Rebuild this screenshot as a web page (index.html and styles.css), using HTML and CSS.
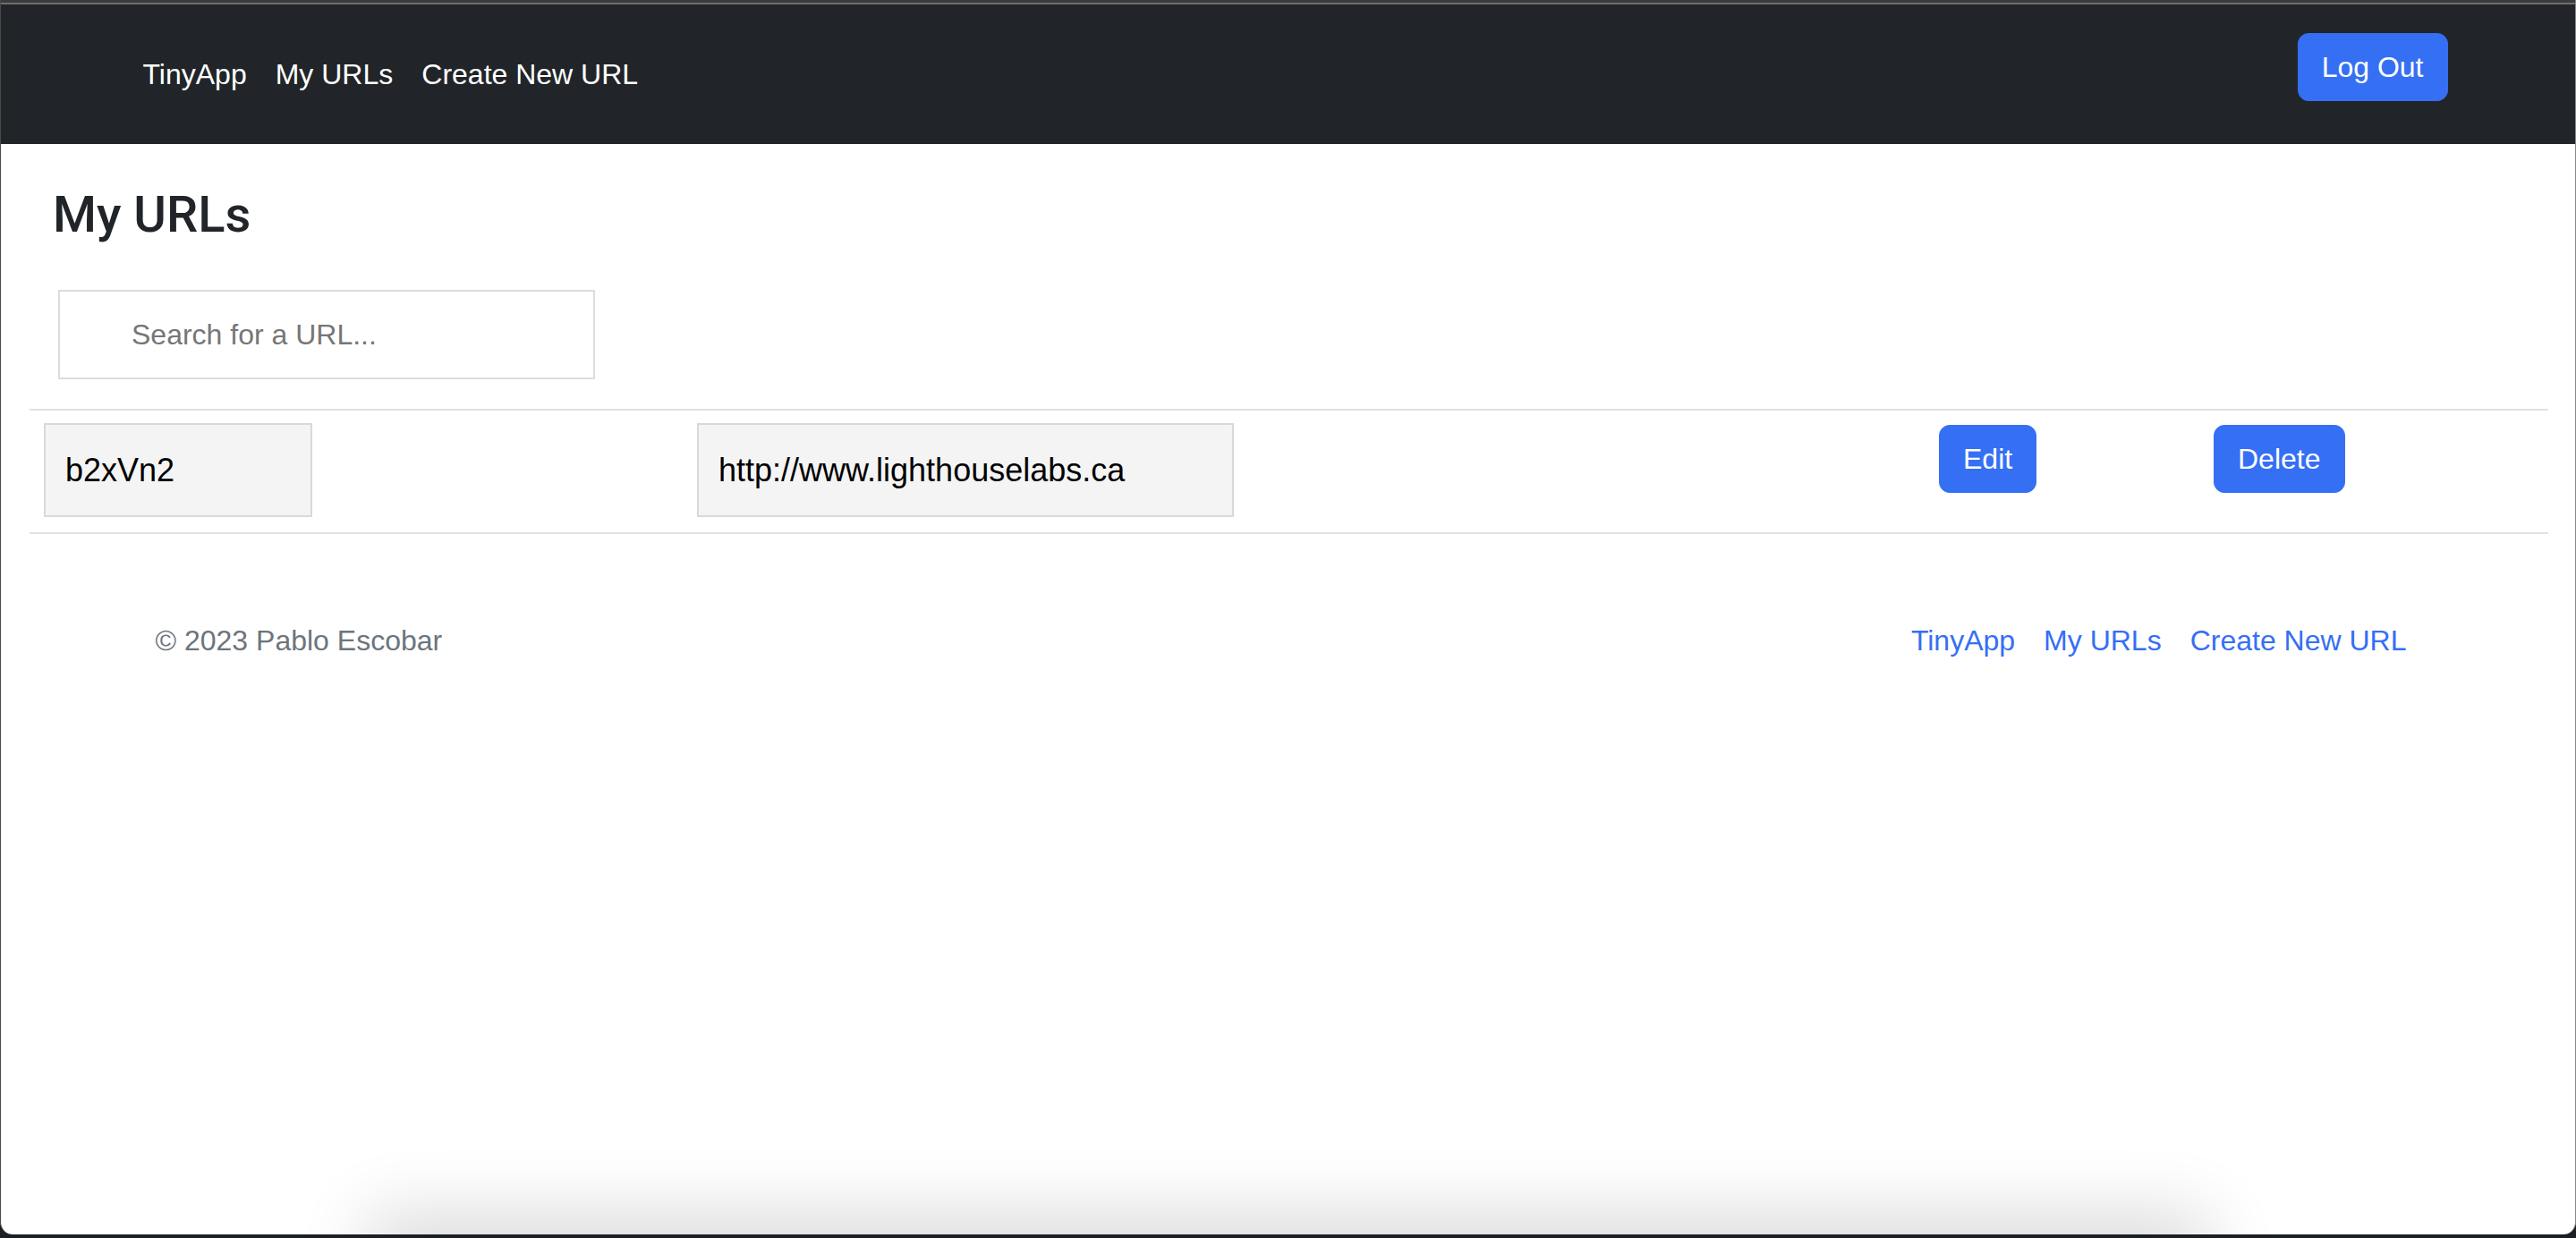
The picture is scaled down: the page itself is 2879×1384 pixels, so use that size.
FILE: index.html
```html
<!DOCTYPE html>
<html lang="en">
<head>
<meta charset="utf-8">
<title>TinyApp - My URLs</title>
<link rel="stylesheet" href="styles.css">
</head>
<body>
<div class="window">
  <div class="chrome-top"></div>
  <nav class="navbar">
    <div class="container nav-inner">
      <ul class="nav-links">
        <li><a href="#" class="nav-link">TinyApp</a></li>
        <li><a href="#" class="nav-link">My URLs</a></li>
        <li><a href="#" class="nav-link">Create New URL</a></li>
      </ul>
      <button class="btn">Log Out</button>
    </div>
  </nav>

  <main class="main">
    <h3 class="title">My URLs</h3>
    <input class="search" type="text" placeholder="Search for a URL...">
  </main>

  <table class="url-table">
    <tbody>
      <tr>
        <td class="col-short"><input class="cell-input short" type="text" value="b2xVn2" readonly></td>
        <td class="col-long"><input class="cell-input long" type="text" value="http://www.lighthouselabs.ca" readonly></td>
        <td class="col-edit"><button class="btn">Edit</button></td>
        <td class="col-delete"><button class="btn">Delete</button></td>
      </tr>
    </tbody>
  </table>

  <footer class="container">
    <div class="footer-inner">
      <p class="copyright">© 2023 Pablo Escobar</p>
      <ul class="footer-links">
        <li><a href="#" class="footer-link">TinyApp</a></li>
        <li><a href="#" class="footer-link">My URLs</a></li>
        <li><a href="#" class="footer-link">Create New URL</a></li>
      </ul>
    </div>
  </footer>

  <div class="bottom-shade"></div>
</div>
</body>
</html>
```

FILE: styles.css
```css
* {
  box-sizing: border-box;
}

html, body {
  margin: 0;
  padding: 0;
}

body {
  background: #1b1f26;
  font-family: "Liberation Sans", Arial, sans-serif;
  color: #212529;
  height: 1384px;
  overflow: hidden;
}

.window {
  position: relative;
  height: 1380px;
  background: #ffffff;
  border-radius: 0 0 14px 14px;
  overflow: hidden;
  border-left: 1px solid #4a4a4a;
  border-right: 1px solid #8a8a8a;
}

.chrome-top {
  height: 5px;
  background: linear-gradient(to bottom, #3b3c3e 0, #3b3c3e 3px, #6e6e6e 3px, #6e6e6e 5px);
}

.container {
  width: 2640px;
  margin: 0 auto;
  padding: 0 24px;
}

.navbar {
  background: #212529;
  height: 156px;
  padding-top: 32px;
}

.nav-inner {
  display: flex;
  justify-content: space-between;
  align-items: flex-start;
}

.nav-links,
.footer-links {
  list-style: none;
  margin: 0;
  padding: 0;
  display: flex;
}

.nav-link {
  display: block;
  padding: 22px 16px 0;
  font-size: 32px;
  line-height: 48px;
  color: #ffffff;
  text-decoration: none;
}

.btn {
  height: 76px;
  padding: 0 26px;
  border: 1px solid #356ff4;
  border-radius: 12px;
  background: #356ff4;
  color: #ffffff;
  font-family: "Liberation Sans", Arial, sans-serif;
  font-size: 32px;
  line-height: 48px;
  cursor: pointer;
}

.main {
  padding: 0 0 0 64px;
}

.title {
  margin: 46px 0 50px -6px;
  font-family: Roboto, "Liberation Sans", sans-serif;
  font-weight: 500;
  font-size: 56px;
  line-height: 67px;
  color: #212529;
}

.search {
  display: block;
  width: 600px;
  height: 100px;
  margin: 0;
  padding: 0 0 0 80px;
  border: 2px solid #dcdcdc;
  background: #ffffff;
  font-family: "Liberation Sans", Arial, sans-serif;
  font-size: 32px;
  color: #212529;
  outline: none;
}

.search::placeholder {
  color: #767676;
}

.url-table {
  width: 2815px;
  margin: 33px 32px 0;
  border-collapse: collapse;
  table-layout: fixed;
}

.url-table tr {
  border-top: 2px solid #dee2e6;
  border-bottom: 2px solid #dee2e6;
}

.url-table td {
  padding: 16px;
  vertical-align: top;
}

.col-short { width: 730px; }
.col-long { width: 1388px; }
.col-edit { width: 307px; }
.col-delete { width: 390px; }

.cell-input {
  display: block;
  height: 105px;
  margin: -2px 0 1px;
  padding: 0 22px;
  border: 2px solid #d9d9d9;
  background: #f4f4f4;
  font-family: "Liberation Sans", Arial, sans-serif;
  font-size: 36px;
  color: #000000;
  outline: none;
}

.cell-input.short { width: 300px; }
.cell-input.long { width: 600px; }

.footer-inner {
  display: flex;
  justify-content: space-between;
  align-items: center;
  margin-top: 95px;
  padding: 0 30px;
}

.copyright {
  margin: 0;
  font-size: 32px;
  line-height: 48px;
  color: #6c757d;
}

.footer-link {
  display: block;
  padding: 0 16px;
  font-size: 32px;
  line-height: 48px;
  color: #356ff4;
  text-decoration: none;
}

.bottom-shade {
  position: absolute;
  left: 430px;
  right: 430px;
  top: 100%;
  height: 40px;
  box-shadow: 0 0 80px 20px rgba(0, 0, 0, 0.16);
}
```
